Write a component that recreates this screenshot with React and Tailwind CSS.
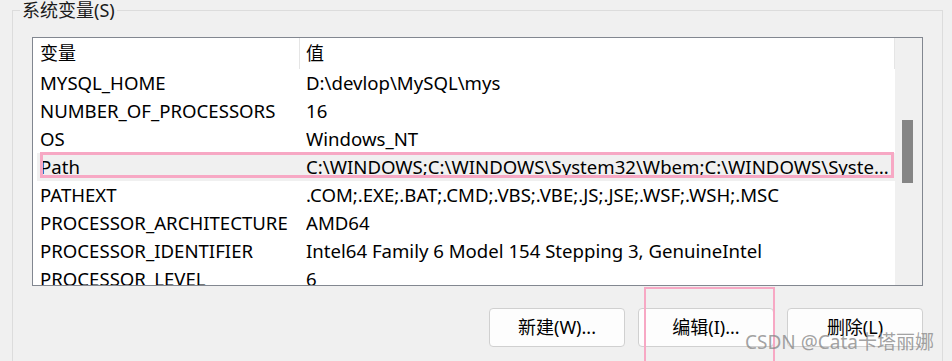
import React from "react";

const rows = [
  ["MYSQL_HOME", "D:\\devlop\\MySQL\\mys"],
  ["NUMBER_OF_PROCESSORS", "16"],
  ["OS", "Windows_NT"],
  ["Path", "C:\\WINDOWS;C:\\WINDOWS\\System32\\Wbem;C:\\WINDOWS\\System32\\WindowsPowerShell\\v1.0\\;C:\\WINDOWS\\System32\\OpenSSH\\"],
  ["PATHEXT", ".COM;.EXE;.BAT;.CMD;.VBS;.VBE;.JS;.JSE;.WSF;.WSH;.MSC"],
  ["PROCESSOR_ARCHITECTURE", "AMD64"],
  ["PROCESSOR_IDENTIFIER", "Intel64 Family 6 Model 154 Stepping 3, GenuineIntel"],
  ["PROCESSOR_LEVEL", "6"],
];

const font = { fontFamily: '"Noto Sans", "Noto Sans CJK SC", sans-serif' };

export default function App() {
  return (
    <div
      className="relative w-[952px] h-[361px] overflow-hidden bg-[#f0f0f0] text-black"
      style={font}
    >
      <fieldset className="ml-[12px] w-[930px] h-[400px] border border-[#dcdcdc] pl-[19px] pr-[19px] pt-[17px] m-0">
        <legend className="ml-[-12px] px-[2px] text-[18px] leading-[20px] text-[#1a1a1a]">
          系统变量(S)
        </legend>
        <div className="flex w-[891px] h-[249px] border border-[#828790] bg-white">
          <div className="w-[862px] overflow-hidden">
            <div className="flex h-[31px] items-center text-[18px]">
              <div className="w-[267px] pl-[7px] border-r border-[#e5e5e5] h-full flex items-center">变量</div>
              <div className="flex-1 pl-[6px] border-r border-[#e5e5e5] h-full flex items-center">值</div>
            </div>
            {rows.map(([k, v]) => {
              const sel = k === "Path";
              return (
                <div
                  key={k}
                  className={`relative flex h-[28px] items-center ml-[4px] text-[18.6px] ${sel ? "bg-[#f0f0f0]" : ""}`}
                >
                  <div className="w-[269px] pl-[3px] whitespace-nowrap overflow-hidden">{k}</div>
                  <div className="w-[585px] whitespace-nowrap overflow-hidden text-ellipsis">{v}</div>
                  {sel && (
                    <div className="absolute left-[3px] top-[-1px] w-[854px] h-[26px] border-[3px] border-[#f7a8c4]" />
                  )}
                </div>
              );
            })}
          </div>
          <div className="w-[27px] bg-[#f0f0f0] pl-[7px] pt-[82px]">
            <div className="w-[11px] h-[63px] bg-[#858585]" />
          </div>
        </div>
        <div className="flex justify-end gap-[13px] mt-[22px] w-[891px]">
          {["新建(W)...", "编辑(I)...", "删除(L)"].map((t) => (
            <button
              key={t}
              className="w-[136px] h-[39px] rounded-[4px] border border-[#d0d0d0] bg-[#fdfdfd] text-[18px] flex items-center justify-center"
            >
              {t}
            </button>
          ))}
        </div>
      </fieldset>
      <div className="absolute left-[644px] top-[287px] w-[131px] h-[90px] border-2 border-[#f7a8c4]" />
      <div className="absolute left-[745px] top-[329px] text-[19px] leading-[26px] text-[#8a8a8a]/80 whitespace-nowrap">
        CSDN @Cata卡塔丽娜
      </div>
    </div>
  );
}
